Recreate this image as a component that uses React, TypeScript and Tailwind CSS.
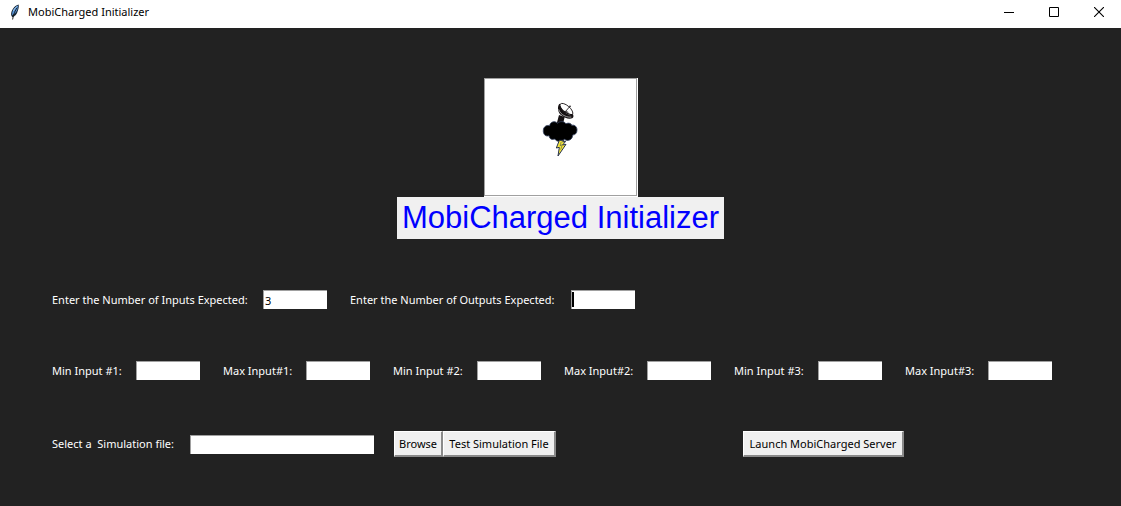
import React, { useId } from "react";

type FieldProps = {
  label: string;
  labelClass: string;
  inputClass?: string;
  value?: string;
  caret?: boolean;
};

function Field({ label, labelClass, inputClass = "w-16", value = "", caret = false }: FieldProps) {
  const id = useId();
  return (
    <div className="flex items-center">
      <label htmlFor={id} className={`shrink-0 whitespace-pre text-white ${labelClass}`}>
        {label}
      </label>
      <div className="relative flex">
        <input
          id={id}
          type="text"
          defaultValue={value}
          className={`h-[19px] border-t border-l border-[#a0a0a0] bg-white px-px text-black outline-none ${inputClass}`}
        />
        {caret && <span className="absolute top-0.5 left-px h-[15px] w-0.5 bg-black" />}
      </div>
    </div>
  );
}

function ToolButton({ widthClass, children }: { widthClass: string; children: React.ReactNode }) {
  return (
    <button
      type="button"
      className={`flex h-[26px] items-center justify-center border-t border-r-2 border-b-2 border-l border-t-white border-r-[#8a8a8a] border-b-[#8a8a8a] border-l-white bg-[#f0f0f0] px-0.5 whitespace-nowrap text-black ${widthClass}`}
    >
      {children}
    </button>
  );
}

function FeatherIcon() {
  return (
    <svg className="h-4 w-2.5" viewBox="0 0 10 16" aria-hidden="true">
      <path d="M8.6.5C5.5 1.2 2.2 4.8 1.3 8.4c-.4 1.8-.2 3.2.6 4.2L2.4 13.2C5.2 12.3 7 10 7.6 7.5 8.4 5.5 9.2 2.5 8.6.5Z" fill="#182838" />
      <path d="M8 1.400C5.300 3 3 5.400 2.300 8.200L2.200 11.200C4.700 10 6.200 8.200 6.900 6.500 7.700 4.800 8.200 3 8 1.400Z" fill="#5a9ae0" />
      <path d="M7.300 3.500C5 6.500 3.500 10 2.600 15.500" fill="none" stroke="#111" strokeWidth=".9" />
      <path d="M6.800 2.600C5.300 3.600 4.100 5 3.500 6.800" fill="none" stroke="#b9d9f5" strokeWidth=".8" />
    </svg>
  );
}

function StormLogo() {
  return (
    <svg className="h-[58px] w-10" viewBox="30 30 120 174" role="img" aria-label="MobiCharged logo">
      <path d="M87 72 104 78 98 102H79Z" fill="#151012" />
      <path d="M88 38C81 47 83 64 94 73c11 10 26 13 34 8 3-2 3-6 1-11Z" fill="#151012" />
      <path d="M86 55c3 9 9 16 19 20 7 3 13 4 19 3" fill="none" stroke="#ddd" strokeWidth="2" />
      <ellipse cx="109" cy="55" rx="24" ry="11" transform="rotate(41 109 55)" fill="#fff" stroke="#151012" strokeWidth="2.5" />
      <path d="M89 43c2 8 8 15 16 20 7 4 14 8 21 8" fill="none" stroke="#151012" strokeWidth="4" />
      <path d="M106 62 119 47M106 61l9 3" fill="none" stroke="#151012" strokeWidth="2.5" />
      <circle cx="120" cy="46" r="2.5" fill="#151012" />
      <path
        d="M57 134C45 138 39 128 40 118c0-10 9-17 19-14 1-12 16-16 24-7 6-7 19-7 25 1 8-4 17 0 17 5 10-3 17 6 16 15 0 9-6 14-13 14 0 14-14 21-25 13-7 8-22 9-29-1-8 3-15 1-17-10Z"
        fill="#000"
        stroke="#34415f"
        strokeWidth="2.5"
        strokeLinejoin="round"
      />
      <path d="M88 148 79 171 88 169 84 195 108 160 98 162 107 151 98 153 102 148Z" fill="#f8ea3c" stroke="#27324d" strokeWidth="3" strokeLinejoin="round" />
      <path d="m94 152-4 12 7-3-5 15" fill="none" stroke="#27324d" strokeWidth="1.5" />
    </svg>
  );
}

function WindowControls() {
  return (
    <div className="flex h-6 text-black">
      <button type="button" aria-label="Minimize" className="flex w-11 items-center justify-center">
        <svg className="size-2.5" viewBox="0 0 10 10" shapeRendering="crispEdges"><path d="M0 5h10v1H0z" /></svg>
      </button>
      <button type="button" aria-label="Maximize" className="flex w-[46px] items-center justify-center">
        <svg className="size-2.5" viewBox="0 0 10 10" fill="none" stroke="currentColor"><path d="M.5.5h9v9h-9z" /></svg>
      </button>
      <button type="button" aria-label="Close" className="flex w-11 items-center justify-center">
        <svg className="size-2.5" viewBox="0 0 10 10" fill="none" stroke="currentColor" strokeWidth="1.1"><path d="m0 0 10 10M10 0 0 10" /></svg>
      </button>
    </div>
  );
}

export default function App() {
  return (
    <div className="flex min-h-screen flex-col bg-[#222222] font-['Noto_Sans','Open_Sans',sans-serif] text-[11px] leading-4">
      <header className="flex h-7 items-start justify-between bg-white text-black">
        <div className="flex items-center gap-2 pt-1 pl-2.5">
          <FeatherIcon />
          <span>MobiCharged Initializer</span>
        </div>
        <WindowControls />
      </header>

      <main className="flex flex-col pt-[50px] pb-12">
        <div className="flex flex-col items-center">
          <div className="border-r border-b border-white">
            <div className="flex h-[118px] w-[153px] justify-center border border-[#a0a0a0] bg-white pt-[22px]">
              <StormLogo />
            </div>
          </div>
          <h1 className="bg-[#f0f0f0] px-[5px] font-['Liberation_Sans',Arial,sans-serif] text-[31px] leading-[42px] text-[#0000ff]">
            MobiCharged Initializer
          </h1>
        </div>

        <form className="flex flex-col px-[52px] pt-[51px]" onSubmit={(e) => e.preventDefault()}>
          <div className="flex flex-wrap gap-x-[23px] gap-y-4">
            <Field label="Enter the Number of Inputs Expected:" labelClass="w-[211px]" value="3" />
            <Field label="Enter the Number of Outputs Expected:" labelClass="w-[221px]" caret />
          </div>

          <div className="flex flex-wrap gap-x-[23px] gap-y-4 pt-[52px]">
            {[1, 2, 3].map((n) => (
              <React.Fragment key={n}>
                <Field label={`Min Input #${n}:`} labelClass="w-[84px]" />
                <Field label={`Max Input#${n}:`} labelClass="w-[83px]" />
              </React.Fragment>
            ))}
          </div>

          <div className="flex flex-wrap items-center gap-y-4 pt-[51px]">
            <Field label="Select a  Simulation file:" labelClass="w-[138px]" inputClass="w-[184px]" />
            <div className="flex pl-5">
              <ToolButton widthClass="min-w-[49px]">Browse</ToolButton>
              <ToolButton widthClass="min-w-[113px]">Test Simulation File</ToolButton>
            </div>
            <div className="pl-[187px]">
              <ToolButton widthClass="min-w-[161px]">Launch MobiCharged Server</ToolButton>
            </div>
          </div>
        </form>
      </main>
    </div>
  );
}
